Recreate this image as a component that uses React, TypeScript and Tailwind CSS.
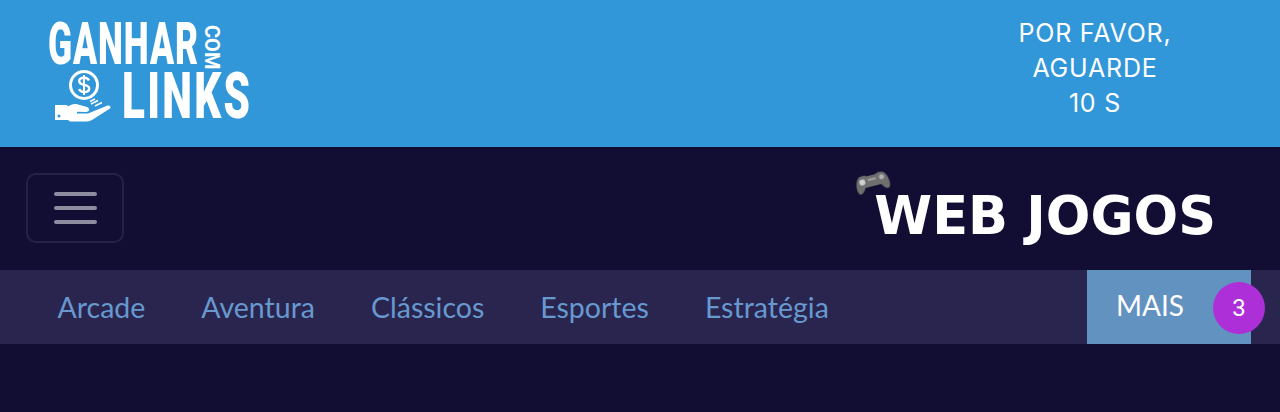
import React from 'react';

const navItems = ['Arcade', 'Aventura', 'Clássicos', 'Esportes', 'Estratégia'];

// hand holding a coin, part of the logo
const CoinHand = () => (
  <svg width="58" height="56" viewBox="0 0 58 56" className="shrink-0 -mt-[2px]">
    <circle cx="30" cy="17" r="13.500" fill="none" stroke="#fff" strokeWidth="3" />
    <path d="M35 12.500c-1-1.800-2.800-2.700-5-2.700-2.800 0-4.800 1.400-4.800 3.500 0 4.800 10 2.500 10 7.200 0 2.200-2.200 3.500-5 3.500-2.300 0-4.200-1-5.200-2.800" fill="none" stroke="#fff" strokeWidth="2.400" />
    <path d="M30 7v20" stroke="#fff" strokeWidth="2" />
    <path d="M1 37h12l1 1.500c3-2 6-3 10-2l9 2.500c3 1 3 5-1 5l-9-.2v1.600l11 .2 19-7.800c2.500-.8 4.500 1 3 2.800L38 52c-2 1-4 1.500-6 1.500H16l-2-1.500H1z" fill="#fff" />
    <circle cx="5" cy="48" r="1.500" fill="#3297d9" />
    <path d="M37 36l7-3.500M41 38l7-3.500M36 33.500l5-2.500" stroke="#fff" strokeWidth="1.400" />
  </svg>
);

const Logo = () => (
  <div className="flex flex-col w-[204px] h-[106px] -mt-[4px] font-['Roboto',sans-serif] font-black text-white">
    <div className="flex items-center h-[50px]">
      <span className="text-[59px] leading-[44px] tracking-[1.500px] origin-left scale-x-[0.6] w-[146px] whitespace-nowrap">GANHAR</span>
      <span className="text-[20px] font-bold leading-[20px] rotate-90 w-[38px] ml-[-1px] text-center">COM</span>
    </div>
    <div className="flex items-center h-[56px] ml-[6px]">
      <CoinHand />
      <span className="text-[64px] leading-[46px] tracking-[3.500px] origin-left scale-x-[0.66] ml-[10px] whitespace-nowrap">LINKS</span>
    </div>
  </div>
);

const GamepadIcon = () => (
  <svg width="38" height="26" viewBox="0 0 38 26" className="rotate-[-14deg] blur-[0.7px]">
    <path d="M6 4c4-2 6-1 9 0h8c3-1 5-2 9 0 3 2 5 11 3 15-2 3-5 1-8-4H11c-3 5-6 7-8 4C1 15 3 6 6 4z" fill="#6f6f6f" />
    <circle cx="9" cy="9" r="3" fill="#cfcfcf" />
    <circle cx="29" cy="8" r="2.500" fill="#b0b0b0" />
    <path d="M15 8h8" stroke="#a0a0a0" strokeWidth="2" />
  </svg>
);

export default function App() {
  return (
    <div className="min-h-[412px] bg-[#120e33] font-['Lato',sans-serif] overflow-hidden">
      <header className="h-[147px] bg-[#3297d9] flex items-center justify-between pl-[48px] pr-[95px]">
        <Logo />
        <div className="w-[180px] pb-[10px] text-center text-white font-['Inter',sans-serif] text-[25px] tracking-[0.8px] leading-[35px]">
          <div>POR FAVOR,</div>
          <div>AGUARDE</div>
          <div>10 S</div>
        </div>
      </header>

      <div className="h-[123px] flex items-center justify-between pl-[26px] pr-[64px]">
        <button className="w-[98px] h-[70px] border-2 border-[#262148] rounded-[10px] flex flex-col items-center justify-center gap-[10px] -translate-y-[1px]">
          <span className="block w-[43px] h-[4px] rounded-full bg-[#8f8ca1]" />
          <span className="block w-[43px] h-[4px] rounded-full bg-[#8f8ca1]" />
          <span className="block w-[43px] h-[4px] rounded-full bg-[#8f8ca1]" />
        </button>
        <div className="relative mt-[16px]">
          <div className="absolute left-[-20px] top-[-19px]">
            <GamepadIcon />
          </div>
          <span className="font-['DejaVu_Sans',sans-serif] font-bold text-white text-[52.500px] leading-none whitespace-nowrap blur-[0.6px] block">WEB JOGOS</span>
        </div>
      </div>

      <nav className="h-[74px] bg-[#2a254f] flex items-center pl-[29.500px]">
        <ul className="flex flex-1">
          {navItems.map((item) => (
            <li key={item} className="px-[28px] text-[28.500px] text-[#6799cf] leading-none">
              {item}
            </li>
          ))}
        </ul>
        <div className="relative w-[164px] h-full bg-[#6292c0] flex items-center pl-[29px] mr-[29px] text-white text-[28px] pb-[4px]">
          MAIS
          <span className="absolute left-[126px] top-[12px] w-[52px] h-[52px] rounded-full bg-[#ad2fd8] flex items-center justify-center font-['Roboto',sans-serif] text-[24px]">
            3
          </span>
        </div>
      </nav>
    </div>
  );
}
